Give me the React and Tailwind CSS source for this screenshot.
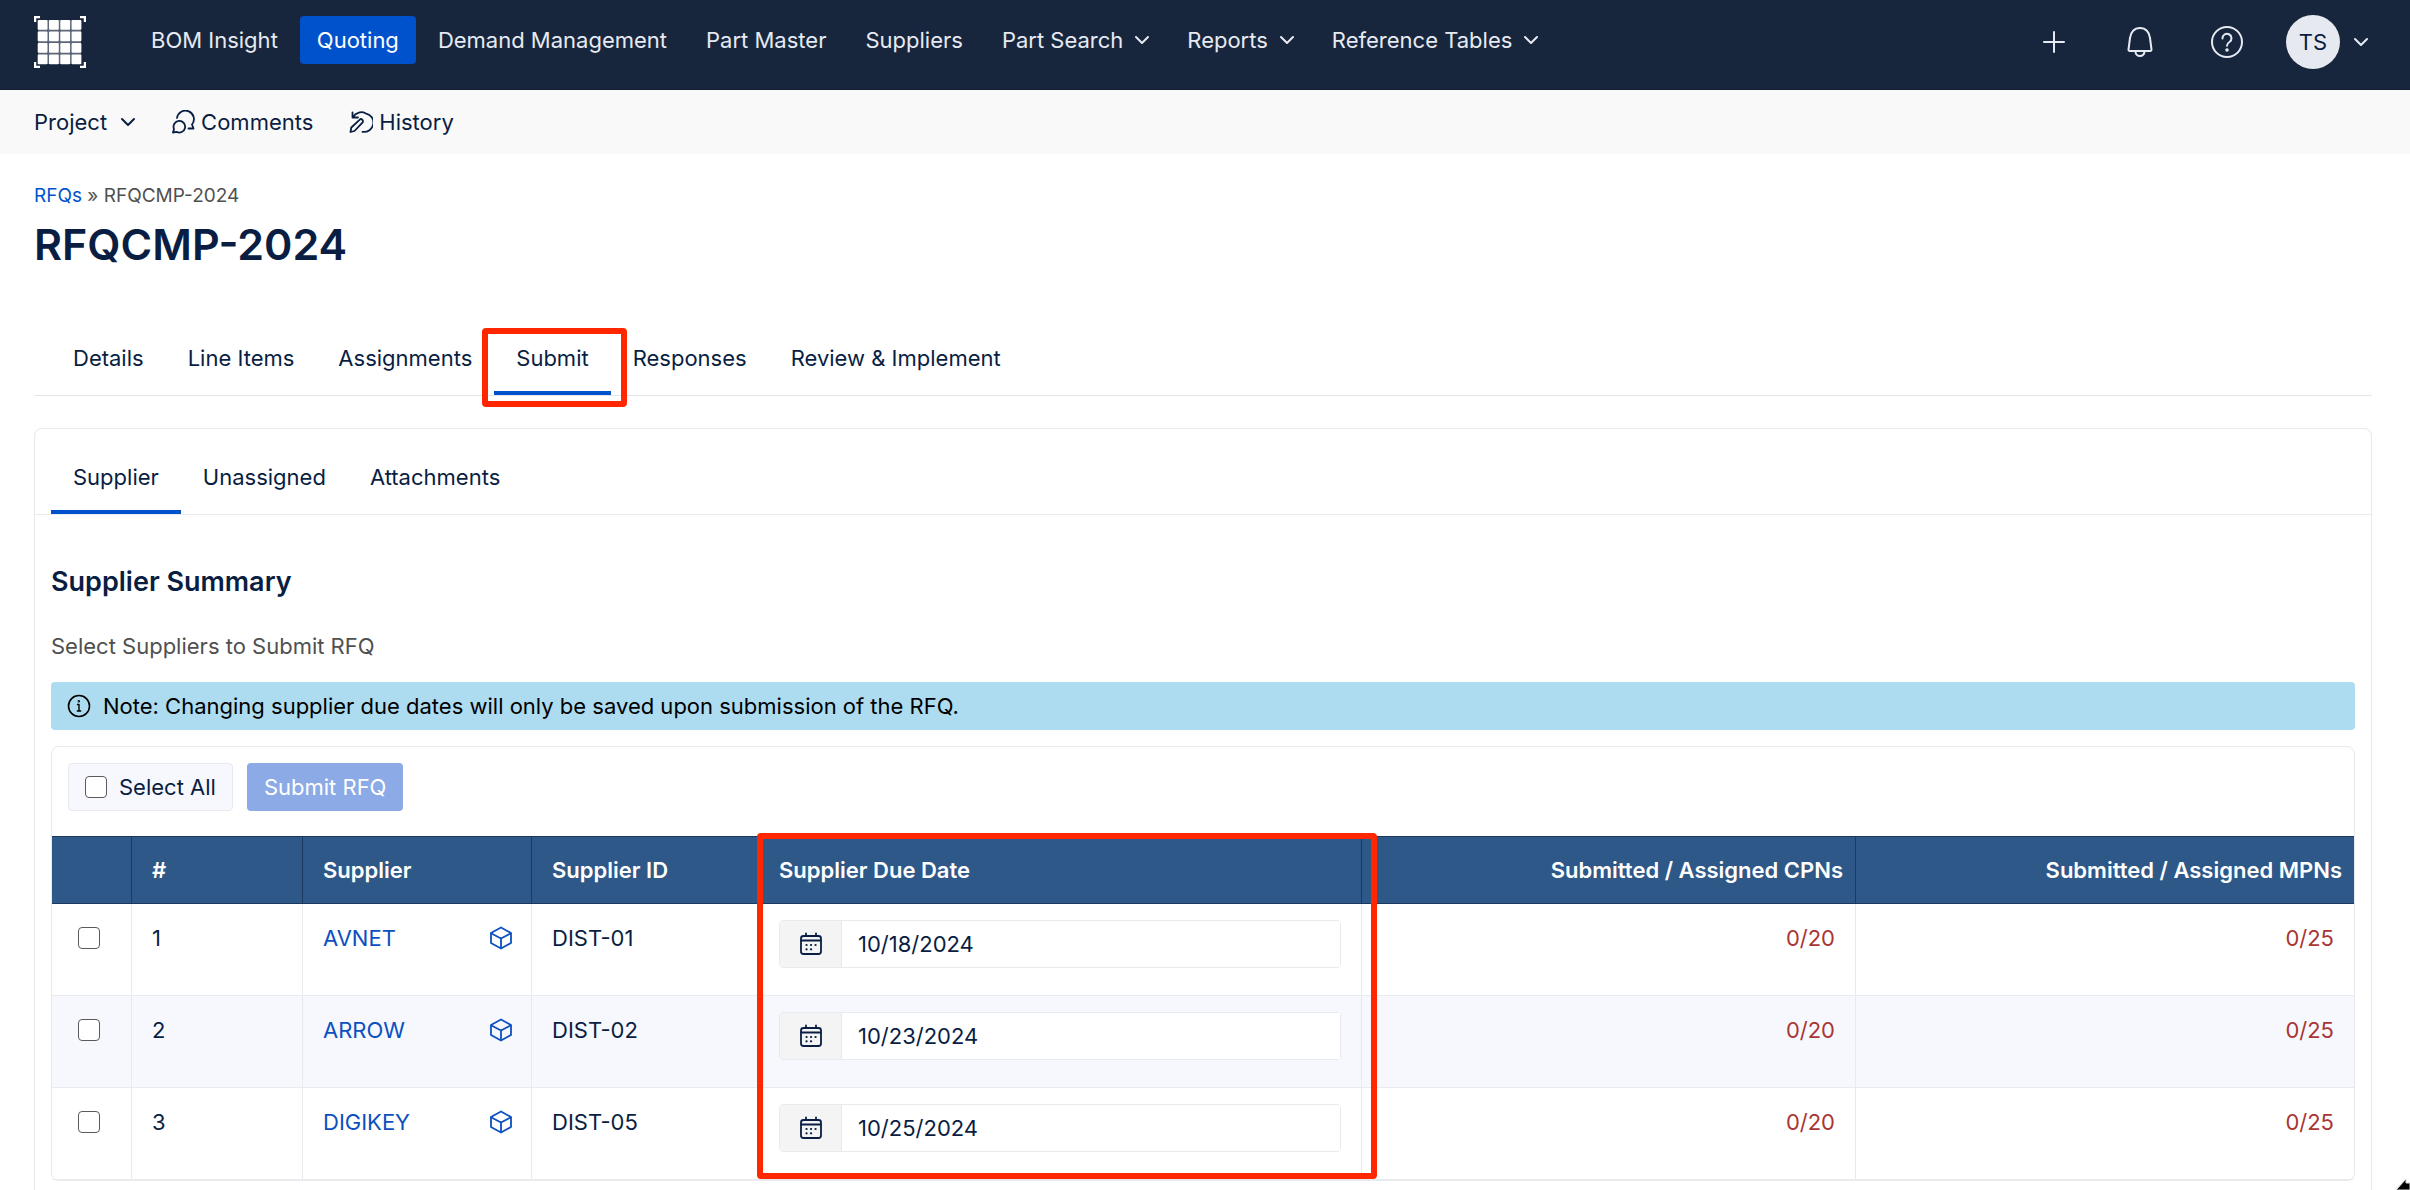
import React, { useState } from 'react';

const NAV_ITEMS = [
    { label: 'BOM Insight' },
    { label: 'Quoting', active: true },
    { label: 'Demand Management' },
    { label: 'Part Master' },
    { label: 'Suppliers' },
    { label: 'Part Search', menu: true },
    { label: 'Reports', menu: true },
    { label: 'Reference Tables', menu: true },
];

const PAGE_TABS = ['Details', 'Line Items', 'Assignments', 'Submit', 'Responses', 'Review & Implement'];
const PANEL_TABS = ['Supplier', 'Unassigned', 'Attachments'];

const SUPPLIERS = [
    { id: 'DIST-01', name: 'AVNET', due: '10/18/2024', cpns: '0/20', mpns: '0/25' },
    { id: 'DIST-02', name: 'ARROW', due: '10/23/2024', cpns: '0/20', mpns: '0/25' },
    { id: 'DIST-05', name: 'DIGIKEY', due: '10/25/2024', cpns: '0/20', mpns: '0/25' },
];

const Icon = ({ size = 24, width = 2, children }) => (
    <svg
        width={size}
        height={size}
        viewBox={`0 0 ${size} ${size}`}
        fill="none"
        stroke="currentColor"
        strokeWidth={width}
        strokeLinecap="round"
        strokeLinejoin="round"
        className="shrink-0"
        aria-hidden="true"
    >
        {children}
    </svg>
);

const Chevron = () => (
    <Icon size={14}>
        <path d="M1 4l6 6 6-6" />
    </Icon>
);

const Logo = () => (
    <svg width="52" height="52" viewBox="0 0 52 52" fill="none" aria-hidden="true" className="shrink-0">
        <path d="M1 6V1h5M46 1h5v5M1 46v5h5M46 51h5v-5" stroke="#fff" strokeWidth="2.5" />
        <rect x="4" y="4" width="43" height="44" fill="#5d6778" />
        {[0, 1, 2, 3].map((row) =>
            [0, 1, 2, 3].map((col) => (
                <rect key={`${row}-${col}`} x={3.7 + col * 11.3} y={4 + row * 11.5} width="9.8" height="9.8" rx="1" fill="#fff" />
            ))
        )}
    </svg>
);

const CommentsIcon = () => (
    <Icon size={24} width={1.8}>
        <path d="M6 8A8.5 8.5 0 1 1 21 14.5L22.5 18.5H17.5" />
        <path d="M2 22.5l1-3.5A5.8 5.8 0 1 1 5.5 21.8L2 22.5Z" />
    </Icon>
);

const HistoryIcon = () => (
    <Icon size={24} width={1.8}>
        <path d="M3.5 2.5V7.5H9M3.8 7.2C7 2.2 12.5 1 16.5 3.3A9.3 9.3 0 0 1 13.5 21.8" />
        <path d="M1.5 22l.8-4.5L10.5 9.8a2 2 0 0 1 2.9 2.9L5.5 21Z" />
    </Icon>
);

const PlusIcon = () => (
    <Icon size={32}>
        <path d="M16 6v20M6 16h20" />
    </Icon>
);

const BellIcon = () => (
    <Icon size={32}>
        <path d="M16 2C10.5 2 6.5 6 6 12L4.5 23.5Q4.3 25 6 25H26Q27.7 25 27.5 23.5L26 12C25.5 6 21.5 2 16 2Z" />
        <path d="M11.5 25.5a4.5 4.5 0 0 0 9 0" />
    </Icon>
);

const HelpIcon = () => (
    <Icon size={34}>
        <circle cx="17" cy="17" r="15" />
        <path d="M12.5 13.5A4.5 4.5 0 1 1 19.5 17C17.8 18 17 18.6 17 20.8" />
        <circle cx="17" cy="25" r="0.8" fill="currentColor" />
    </Icon>
);

const InfoIcon = () => (
    <Icon size={24} width={1.6}>
        <circle cx="12" cy="12" r="10.5" />
        <path d="M10.5 10.5H12V17M10.3 17h3.4" strokeWidth="1.4" />
        <circle cx="11.8" cy="7.3" r="0.4" />
    </Icon>
);

const CubeIcon = () => (
    <Icon size={24} width={1.8}>
        <path d="M12 1.5L22 7V17L12 22.5L2 17V7Z" />
        <path d="M2.5 7.5L12 12.5L21.5 7.5M12 12.5V22" />
    </Icon>
);

const CalendarIcon = () => (
    <Icon size={24} width={1.8}>
        <rect x="2" y="4" width="20" height="18" rx="2.5" />
        <path d="M2.5 8.5h19M7 1.5V4M17 1.5V4" />
        <path d="M7.5 13h.1M12 13h.1M16.5 13h.1M7.5 17.3h.1M12 17.3h.1" strokeWidth="2.2" />
    </Icon>
);

const Checkbox = (props) => (
    <input
        type="checkbox"
        className="block size-[22px] shrink-0 appearance-none rounded-[4px] border border-[#5a5a5a] bg-white checked:bg-[#0052cc]"
        {...props}
    />
);

const Tab = ({ label, active, onClick, children }) => (
    <button
        role="tab"
        aria-selected={active}
        onClick={onClick}
        className={`relative border-b-4 px-[22px] pt-5 pb-[19px] leading-7 ${active ? 'border-[#0052cc]' : 'border-transparent'}`}
    >
        {label}
        {children}
    </button>
);

const headCell = 'border-r border-y border-[#1c3a60] h-[68px] px-5 text-left font-semibold last:border-r-0';
const bodyCell = 'border-r border-b border-[#e8eaee] pt-5 pl-5 align-top last:border-r-0';

export default function App() {
    const [panelTab, setPanelTab] = useState('Supplier');
    const [selected, setSelected] = useState([]);
    const allSelected = selected.length === SUPPLIERS.length;

    const toggle = (id) => {
        setSelected((prev) => (prev.includes(id) ? prev.filter((s) => s !== id) : [...prev, id]));
    };

    return (
        <div className="relative flex h-screen flex-col overflow-hidden bg-white font-['Inter',sans-serif] text-[22px] leading-7 text-[#091e42]">
            {/* --- Top navigation --- */}
            <header className="flex h-[90px] shrink-0 items-start border-b border-[#141c3a] bg-[#18263d] pr-[42px] pl-[34px] text-[#e6eaf2]">
                <div className="pt-4">
                    <Logo />
                </div>
                <nav className="flex gap-[5px] pt-4 pl-12">
                    {NAV_ITEMS.map((item) => (
                        <button
                            key={item.label}
                            className={`flex h-12 items-center gap-3 rounded pl-[17px] whitespace-nowrap ${item.menu ? 'pr-4' : 'pr-[17px]'} ${item.active ? 'bg-[#0052cc] text-white' : ''}`}
                        >
                            {item.label}
                            {item.menu && <Chevron />}
                        </button>
                    ))}
                </nav>
                <div className="ml-auto flex h-[84px] items-center gap-[54px]">
                    <button aria-label="Create"><PlusIcon /></button>
                    <button aria-label="Notifications"><BellIcon /></button>
                    <button aria-label="Help"><HelpIcon /></button>
                    <button aria-label="Account" className="-ml-3 flex items-center gap-3.5">
                        <span className="flex size-[54px] items-center justify-center rounded-full bg-[#e6eaf0] text-[#091e42]">TS</span>
                        <Chevron />
                    </button>
                </div>
            </header>

            {/* --- Project bar --- */}
            <div className="flex h-16 shrink-0 items-center gap-9 bg-[#f9f9f9] px-[34px]">
                <button className="flex items-center gap-3.5">
                    Project
                    <Chevron />
                </button>
                <button className="flex items-center gap-1.5"><CommentsIcon />Comments</button>
                <button className="flex items-center gap-1.5"><HistoryIcon />History</button>
            </div>

            <main className="flex flex-1 flex-col pt-7 pr-[38px] pl-[34px]">
                <div className="text-[19px] text-[#505050]">
                    <a href="#rfqs" className="text-[#0052cc]">RFQs</a> » RFQCMP-2024
                </div>
                <h1 className="mt-2 text-[43px] leading-[52px] font-semibold">RFQCMP-2024</h1>

                <div role="tablist" className="mt-[54px] flex border-b border-[#e6e6e6] pl-[17px]">
                    {PAGE_TABS.map((label) => (
                        <Tab key={label} label={label} active={label === 'Submit'}>
                            {label === 'Submit' && (
                                <span className="pointer-events-none absolute top-1 -right-4 -bottom-4 -left-3 z-10 rounded-sm border-6 border-[#ff2600]" />
                            )}
                        </Tab>
                    ))}
                </div>

                {/* --- Supplier panel, runs past the bottom of the window --- */}
                <section className="mt-8 flex-1 rounded-t-lg border border-b-0 border-[#e8eaee]">
                    <div role="tablist" className="flex border-b border-[#e8eaee] pt-3.5 pl-4">
                        {PANEL_TABS.map((label) => (
                            <Tab key={label} label={label} active={label === panelTab} onClick={() => setPanelTab(label)} />
                        ))}
                    </div>

                    <div className="px-4 pt-[49px]">
                        <h2 className="text-[27px] leading-9 font-semibold">Supplier Summary</h2>
                        <p className="mt-8 text-[#505050]">Select Suppliers to Submit RFQ</p>

                        <div className="mt-[22px] flex h-12 items-center gap-3 rounded-sm bg-[#addbf0] px-4 text-black">
                            <InfoIcon />
                            Note: Changing supplier due dates will only be saved upon submission of the RFQ.
                        </div>

                        <div className="mt-4 rounded-lg border border-[#e8eaee]">
                            <div className="flex gap-3.5 p-4">
                                <label className="flex h-12 items-center gap-3 rounded border border-[#e8eaee] bg-[#f7f8fd] px-4">
                                    <Checkbox
                                        checked={allSelected}
                                        onChange={() => setSelected(allSelected ? [] : SUPPLIERS.map((s) => s.id))}
                                    />
                                    Select All
                                </label>
                                <button
                                    disabled={selected.length === 0}
                                    className="h-12 rounded bg-[#0052cc] px-[17px] text-white disabled:bg-[#8caae6]"
                                >
                                    Submit RFQ
                                </button>
                            </div>

                            <table className="mt-[9px] w-full table-fixed border-separate border-spacing-0">
                                <colgroup>
                                    <col className="w-[80px]" />
                                    <col className="w-[171px]" />
                                    <col className="w-[229px]" />
                                    <col className="w-[227px]" />
                                    <col className="w-[603px]" />
                                    <col className="w-[494px]" />
                                    <col />
                                </colgroup>
                                <thead className="bg-[#2e5888] text-white">
                                    <tr>
                                        <th className={headCell} aria-label="Select" />
                                        <th className={headCell}>#</th>
                                        <th className={headCell}>Supplier</th>
                                        <th className={headCell}>Supplier ID</th>
                                        <th className={`${headCell} relative`}>
                                            Supplier Due Date
                                            <span className="pointer-events-none absolute -top-1 -right-4 -left-0.5 z-10 h-[346px] rounded-sm border-6 border-[#ff2600]" />
                                        </th>
                                        <th className={headCell}><span className="-mr-2 block text-right">Submitted / Assigned CPNs</span></th>
                                        <th className={headCell}><span className="-mr-2 block text-right">Submitted / Assigned MPNs</span></th>
                                    </tr>
                                </thead>
                                <tbody>
                                    {SUPPLIERS.map((s, i) => (
                                        <tr key={s.id} className="h-[92px] even:bg-[#f7f8fd]">
                                            <td className={bodyCell}>
                                                <div className="flex h-7 items-center pl-1.5">
                                                    <Checkbox
                                                        aria-label={`Select ${s.name}`}
                                                        checked={selected.includes(s.id)}
                                                        onChange={() => toggle(s.id)}
                                                    />
                                                </div>
                                            </td>
                                            <td className={bodyCell}>{i + 1}</td>
                                            <td className={bodyCell}>
                                                <div className="flex items-center justify-between pr-[18px] text-[#0c50c0]">
                                                    <a href={`#${s.name}`}>{s.name}</a>
                                                    <CubeIcon />
                                                </div>
                                            </td>
                                            <td className={bodyCell}>{s.id}</td>
                                            <td className="border-r border-b border-[#e8eaee] px-5 pt-4 align-top">
                                                <div className="flex h-12 rounded-sm border border-[#e8eaee] bg-white">
                                                    <label
                                                        htmlFor={`due-${s.id}`}
                                                        aria-label={`Due date for ${s.name}`}
                                                        className="flex w-[62px] items-center justify-center border-r border-[#e8eaee] bg-[#f4f4f5]"
                                                    >
                                                        <CalendarIcon />
                                                    </label>
                                                    <input
                                                        id={`due-${s.id}`}
                                                        type="text"
                                                        defaultValue={s.due}
                                                        className="min-w-0 flex-1 bg-white px-4 outline-none"
                                                    />
                                                </div>
                                            </td>
                                            <td className={`${bodyCell} pr-5 text-right text-[#a93535]`}>{s.cpns}</td>
                                            <td className={`${bodyCell} pr-5 text-right text-[#a93535]`}>{s.mpns}</td>
                                        </tr>
                                    ))}
                                </tbody>
                            </table>
                        </div>
                    </div>
                </section>
            </main>

            {/* Corner arrow */}
            <svg className="absolute right-0 bottom-0" width="16" height="14" viewBox="0 0 16 14" aria-hidden="true">
                <path d="M2 14L12 3v4h4v7Z" fill="#000" stroke="#ddd" strokeWidth="1" />
            </svg>
        </div>
    );
}
